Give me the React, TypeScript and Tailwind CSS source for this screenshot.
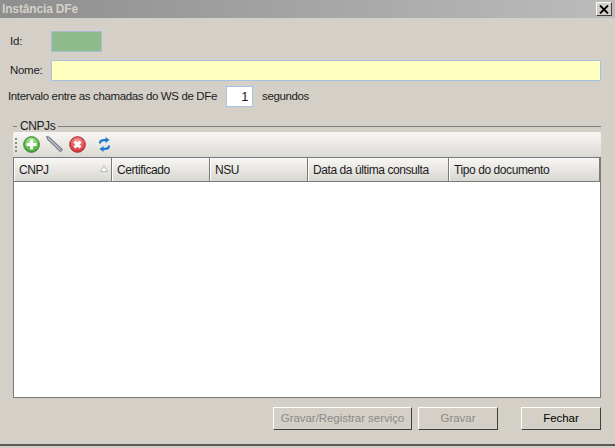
const columns = [
  { title: 'CNPJ', width: 'w-[98px]', sorted: true },
  { title: 'Certificado', width: 'w-[98px]', sorted: false },
  { title: 'NSU', width: 'w-[98px]', sorted: false },
  { title: 'Data da última consulta', width: 'w-[141px]', sorted: false },
  { title: 'Tipo do documento', width: 'flex-1', sorted: false },
]

function IconAdd() {
  return (
    <svg width="17" height="17" viewBox="0 0 17 17">
      <defs>
        <radialGradient id="add" cx="0.5" cy="0.3" r="0.8">
          <stop offset="0" stopColor="#b5eb9d" />
          <stop offset="1" stopColor="#2f9d25" />
        </radialGradient>
      </defs>
      <circle cx="8.5" cy="8.5" r="7.8" fill="url(#add)" stroke="#2c7d22" />
      <path d="M8.5 3.5v10M3.5 8.5h10" stroke="#fff" strokeWidth="2.8" />
    </svg>
  )
}

function IconPencil() {
  return (
    <svg width="17" height="17" viewBox="0 0 17 17">
      <path d="M0.5 0.5l3 0.8 13 12.2-2 2.5-13-12.5z" fill="#8d97a6" stroke="#5d6672" strokeWidth="0.7" />
      <path d="M2 2l12.5 12" stroke="#cfd6e0" strokeWidth="1" />
    </svg>
  )
}

function IconRemove() {
  return (
    <svg width="17" height="17" viewBox="0 0 17 17">
      <defs>
        <radialGradient id="remove" cx="0.5" cy="0.3" r="0.8">
          <stop offset="0" stopColor="#f79a9a" />
          <stop offset="1" stopColor="#d31f26" />
        </radialGradient>
      </defs>
      <circle cx="8.5" cy="8.5" r="7.8" fill="url(#remove)" stroke="#a8282c" />
      <path d="M5.5 5.5l6 6M11.5 5.5l-6 6" stroke="#fff" strokeWidth="3" />
    </svg>
  )
}

function IconRefresh() {
  return (
    <svg width="11" height="15" viewBox="0 0 11 15" fill="none">
      <path d="M1 6.5c0-2.2 1.5-3.3 4-3.3h2" stroke="#1f78d1" strokeWidth="2.2" />
      <path d="M6.5 0l4 3-4 3z" fill="#1f78d1" />
      <path d="M10 8.5c0 2.2-1.5 3.3-4 3.3H4" stroke="#1f78d1" strokeWidth="2.2" />
      <path d="M4.5 9l-4 3 4 3z" fill="#1f78d1" />
    </svg>
  )
}

function Button({ label, width, disabled }: { label: string; width: string; disabled?: boolean }) {
  return (
    <button
      className={`${width} h-[23px] bg-[#d4d0c8] border border-t-white border-l-white border-r-[#404040] border-b-[#404040] tracking-[-0.05px] ${
        disabled ? 'text-[#8a8a8a]' : 'text-black'
      }`}
    >
      {label}
    </button>
  )
}

export default function App() {
  return (
    <div className="w-[615px] h-[448px] flex flex-col bg-[#d4d0c8] text-[11.5px] tracking-[-0.18px] whitespace-nowrap text-[#1c1c1c] font-['Liberation_Sans',sans-serif] overflow-hidden">
      <div className="h-[18px] shrink-0 flex items-center justify-between pl-[2px] pr-[3px] bg-gradient-to-r from-[#8e8e8e] to-[#bcbcbc]">
        <span className="text-[12px] tracking-[-0.15px] font-bold text-[#d4d0c8]">Instância DFe</span>
        <span className="w-4 h-[14px] flex items-center justify-center bg-[#d4d0c8] border border-t-white border-l-white border-r-[#404040] border-b-[#404040]">
          <svg width="10" height="9" viewBox="0 0 10 9">
            <path d="M1 0.5l8 8M9 0.5l-8 8" stroke="#000" strokeWidth="1.8" />
          </svg>
        </span>
      </div>

      <div className="flex-1 flex flex-col pt-[13px] pl-[8px] pr-[14px]">
        <div className="flex items-center h-[21px]">
          <span className="w-[43px] pl-[2px]">Id:</span>
          <div className="w-[51px] h-[21px] bg-[#90bb8c] border border-[#a9bdd0]" />
        </div>

        <div className="flex items-center h-[21px] mt-[8px]">
          <span className="w-[43px] pl-[2px] tracking-[-0.3px]">Nome:</span>
          <div className="flex-1 h-[21px] bg-[#ffffbf] border border-[#a6c3e3]" />
        </div>

        <div className="flex items-center h-[21px] mt-[5px] tracking-[-0.37px]">
          <span className="w-[218px]">Intervalo entre as chamadas do WS de DFe</span>
          <div className="w-[27px] h-[21px] bg-white border border-[#a6c3e3] text-right pr-[4px] text-[13px] leading-[19px]">1</div>
          <span className="ml-[9px]">segundos</span>
        </div>

        <div className="flex items-center h-[16px] mt-[11px] pl-[5px]">
          <div className="w-[4px] h-[1px] bg-[#7f7f7f]" />
          <span className="px-[3px] text-[12px] tracking-[-0.42px]">CNPJs</span>
          <div className="flex-1 h-[1px] bg-[#7f7f7f]" />
        </div>

        <div className="ml-[5px] flex-1 flex flex-col">
          <div className="h-[25px] mt-[-2px] flex items-center bg-gradient-to-b from-[#f8f7f5] to-[#dcdad4] rounded-t-[2px] pl-[2px]">
            <div className="w-[2px] h-[14px] border-l-2 border-dotted border-[#8a8a8a]" />
            <div className="ml-[6px] flex items-center">
              <IconAdd />
            </div>
            <div className="ml-[6px] flex items-center">
              <IconPencil />
            </div>
            <div className="ml-[6px] flex items-center">
              <IconRemove />
            </div>
            <div className="ml-[13px] flex items-center">
              <IconRefresh />
            </div>
          </div>

          <div className="h-[241px] flex flex-col bg-white border border-[#7a7a7a]">
            <div className="h-[24px] flex border-b border-[#7a7a7a]">
              {columns.map(col => (
                <div
                  key={col.title}
                  className={`${col.width} relative flex items-center pl-[4px] text-[12px] tracking-[-0.42px] bg-gradient-to-b from-[#f8f7f5] to-[#d9d7d1] border-l border-l-white border-r border-r-[#7a7a7a]`}
                >
                  {col.title}
                  {col.sorted && (
                    <svg className="absolute right-[3px] top-[7px]" width="8" height="7" viewBox="0 0 8 7">
                      <path d="M4 0.5L7.5 6.5H0.5z" fill="#fff" stroke="#a0a0a0" strokeWidth="0.7" />
                    </svg>
                  )}
                </div>
              ))}
            </div>
          </div>

          <div className="flex justify-end mt-[9px]">
            <Button label="Gravar/Registrar serviço" width="w-[139px]" disabled />
            <Button label="Gravar" width="w-[80px] ml-[6px]" disabled />
            <Button label="Fechar" width="w-[80px] ml-[23px]" />
          </div>
        </div>
      </div>

      <div className="h-[4px] shrink-0 bg-[#d4d0c8] border-t-2 border-[#5a5a5a]" />
    </div>
  )
}
